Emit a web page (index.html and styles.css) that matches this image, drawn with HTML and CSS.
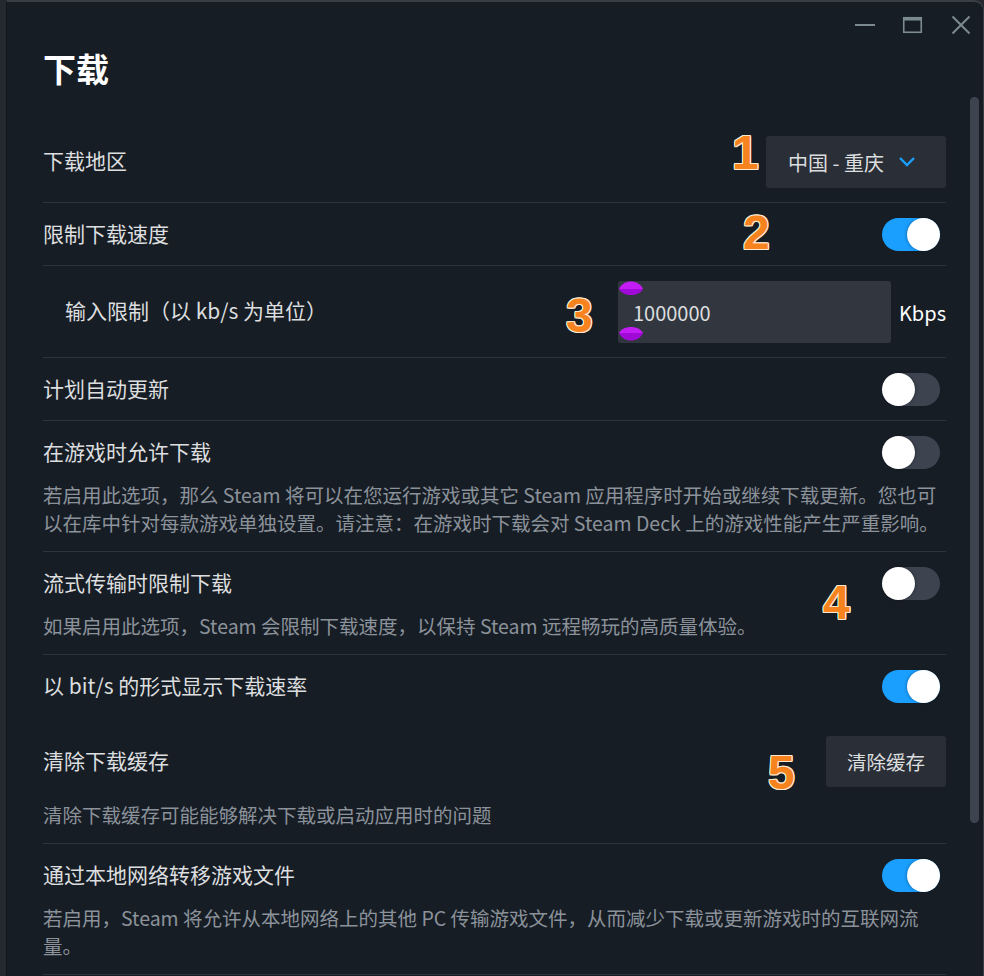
FILE: index.html
```html
<!DOCTYPE html>
<html lang="zh-CN">
<head>
    <meta charset="UTF-8">
    <meta name="viewport" content="width=device-width, initial-scale=1.0">
    <title>下载</title>
    <link rel="stylesheet" href="styles.css">
</head>
<body>
<div class="window">
    <div class="titlebar">
        <svg class="ctl" viewBox="0 0 24 24"><line x1="2" y1="12" x2="22" y2="12" stroke="#7b8a90" stroke-width="2"/></svg>
        <svg class="ctl" viewBox="0 0 24 24"><rect x="2.75" y="4.75" width="17.5" height="14.5" fill="none" stroke="#7b8a90" stroke-width="1.6"/><rect x="2" y="4" width="19" height="3.5" fill="#7b8a90"/></svg>
        <svg class="ctl" viewBox="0 0 24 24"><path d="M3.5 3.5 L20.5 20.5 M20.5 3.5 L3.5 20.5" stroke="#7b8a90" stroke-width="2" fill="none"/></svg>
    </div>
    <div class="main">
        <div class="content">
            <h1 class="title">下载</h1>

            <div class="row">
                <div class="head">
                    <span class="label">下载地区</span>
                    <div class="dropdown">
                        <span>中国 - 重庆</span>
                        <svg class="chev" viewBox="0 0 18 12"><path d="M2 2 L9 9 L16 2" stroke="#1a9fff" stroke-width="2.4" fill="none"/></svg>
                    </div>
                </div>
            </div>

            <div class="row">
                <div class="head">
                    <span class="label">限制下载速度</span>
                    <div class="toggle on"><div class="knob"></div></div>
                </div>
            </div>

            <div class="row">
                <div class="head indent">
                    <span class="label">输入限制（以 kb/s 为单位）</span>
                    <div class="limit">
                        <div class="input">
                            1000000
                            <svg class="handle top" viewBox="0 0 24 16"><path d="M0 8 C4 -2 20 -2 24 8 Z" fill="#c41cf5"/><path d="M0 8 L24 8 C20 16 4 16 0 8 Z" fill="#a00ad6"/></svg>
                            <svg class="handle bottom" viewBox="0 0 24 16"><path d="M0 8 C4 0 20 0 24 8 Z" fill="#c41cf5"/><path d="M0 8 L24 8 C20 18 4 18 0 8 Z" fill="#a00ad6"/></svg>
                        </div>
                        <span class="unit">Kbps</span>
                    </div>
                </div>
            </div>

            <div class="row">
                <div class="head">
                    <span class="label">计划自动更新</span>
                    <div class="toggle"><div class="knob"></div></div>
                </div>
            </div>

            <div class="row">
                <div class="head">
                    <span class="label">在游戏时允许下载</span>
                    <div class="toggle"><div class="knob"></div></div>
                </div>
                <div class="desc">若启用此选项，那么 Steam 将可以在您运行游戏或其它 Steam 应用程序时开始或继续下载更新。您也可以在库中针对每款游戏单独设置。请注意：在游戏时下载会对 Steam Deck 上的游戏性能产生严重影响。</div>
            </div>

            <div class="row">
                <div class="head">
                    <span class="label">流式传输时限制下载</span>
                    <div class="toggle"><div class="knob"></div></div>
                </div>
                <div class="desc">如果启用此选项，Steam 会限制下载速度，以保持 Steam 远程畅玩的高质量体验。</div>
            </div>

            <div class="row noline">
                <div class="head">
                    <span class="label">以 bit/s 的形式显示下载速率</span>
                    <div class="toggle on"><div class="knob"></div></div>
                </div>
            </div>

            <div class="row">
                <div class="head">
                    <span class="label">清除下载缓存</span>
                    <button class="btn">清除缓存</button>
                </div>
                <div class="desc wide">清除下载缓存可能能够解决下载或启动应用时的问题</div>
            </div>

            <div class="row">
                <div class="head">
                    <span class="label">通过本地网络转移游戏文件</span>
                    <div class="toggle on"><div class="knob"></div></div>
                </div>
                <div class="desc">若启用，Steam 将允许从本地网络上的其他 PC 传输游戏文件，从而减少下载或更新游戏时的互联网流量。</div>
            </div>
        </div>
        <div class="scroll"><div class="thumb"></div></div>
    </div>

    <span class="mark m1">1</span>
    <span class="mark m2">2</span>
    <span class="mark m3">3</span>
    <span class="mark m4">4</span>
    <span class="mark m5">5</span>
</div>
</body>
</html>
```

FILE: styles.css
```css
* {
    box-sizing: border-box;
}
body {
    margin: 0;
    background-color: #25282e;
    font-family: "Noto Sans CJK SC", "Noto Sans", sans-serif;
    overflow: hidden;
}
.window {
    position: relative;
    margin-left: 6px;
    height: 976px;
    background-color: #171d25;
    border-top: 2px solid #3a3e45;
    border-left: 1px solid #121519;
    border-right: 1px solid #3a3e45;
    border-top-right-radius: 10px;
    display: flex;
    flex-direction: column;
}
.titlebar {
    height: 50px;
    padding: 0 10px 4px 0;
    display: flex;
    justify-content: flex-end;
    align-items: center;
    gap: 24px;
}
.ctl {
    width: 24px;
    height: 24px;
}
.main {
    flex: 1;
    display: flex;
    min-height: 0;
}
.content {
    flex: 1;
    padding-left: 36px;
}
.scroll {
    width: 37px;
    padding-left: 24px;
}
.thumb {
    width: 9px;
    height: 726px;
    margin-top: 45px;
    background-color: #3d4450;
    border-radius: 5px;
}
.title {
    margin: -4px 0 33px;
    font-size: 33px;
    line-height: 40px;
    font-weight: 700;
    color: #ffffff;
}
.row {
    padding: 15px 0 14px;
    border-bottom: 1px solid #2e343c;
}
.row.noline {
    border-bottom: none;
    padding-bottom: 18px;
}
.head {
    display: flex;
    align-items: center;
    justify-content: space-between;
    min-height: 33px;
}
.head.indent {
    padding-left: 22px;
}
.label {
    margin-top: -4px;
    font-size: 21px;
    line-height: 30px;
    color: #dcdedf;
}
.desc {
    margin-top: 12px;
    font-size: 19.5px;
    line-height: 28px;
    color: #8b929a;
}
.desc.wide {
    margin-top: 14px;
}
.dropdown {
    width: 180px;
    height: 52px;
    padding-left: 22px;
    display: flex;
    align-items: center;
    gap: 14px;
    background-color: #2a2f37;
    border-radius: 3px;
    font-size: 20px;
    color: #dcdedf;
}
.chev {
    width: 18px;
    height: 12px;
}
.toggle {
    position: relative;
    width: 58px;
    height: 33px;
    margin-right: 6px;
    border-radius: 17px;
    background-color: #3d4450;
}
.toggle.on {
    background-color: #1a9fff;
}
.knob {
    position: absolute;
    top: 0;
    left: 0;
    width: 33px;
    height: 33px;
    border-radius: 50%;
    background-color: #ffffff;
    box-shadow: 1px 0 3px rgba(0, 0, 0, 0.25);
}
.toggle.on .knob {
    left: 25px;
    box-shadow: -1px 0 3px rgba(0, 0, 0, 0.25);
}
.limit {
    display: flex;
    align-items: center;
}
.input {
    position: relative;
    width: 273px;
    height: 62px;
    margin-left: 2px;
    padding-left: 15px;
    display: flex;
    align-items: center;
    background-color: #32373f;
    border-radius: 3px;
    font-size: 20px;
    color: #dcdedf;
}
.handle {
    position: absolute;
    left: 1px;
    width: 24px;
    height: 16px;
}
.handle.top {
    top: 0;
}
.handle.bottom {
    bottom: 2px;
}
.unit {
    margin-left: 8px;
    font-size: 20px;
    color: #ffffff;
}
.btn {
    width: 120px;
    height: 51px;
    border: none;
    border-radius: 3px;
    background-color: #2a2f37;
    font-family: inherit;
    font-size: 19.5px;
    color: #dcdedf;
}
.mark {
    position: absolute;
    font-family: "Liberation Sans", sans-serif;
    font-weight: 700;
    font-size: 48px;
    line-height: 1;
    color: #f7831f;
    text-shadow: 1px 0 0 #fbe9cf, -1px 0 0 #fbe9cf, 0 1px 0 #fbe9cf, 0 -1px 0 #fbe9cf,
        1px 1px 0 #fbe9cf, -1px -1px 0 #fbe9cf, 1px -1px 0 #fbe9cf, -1px 1px 0 #fbe9cf;
}
.m1 { left: 725px; top: 127px; }
.m2 { left: 736px; top: 207px; }
.m3 { left: 559px; top: 290px; }
.m4 { left: 816px; top: 577px; }
.m5 { left: 761px; top: 747px; }
```
